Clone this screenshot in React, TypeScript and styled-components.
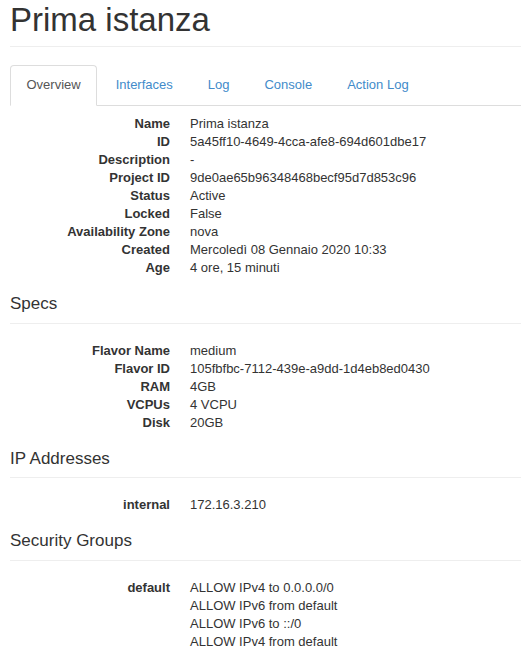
import React from "react";
import styled, { createGlobalStyle } from "styled-components";

const GlobalStyle = createGlobalStyle`
  body {
    margin: 0;
    background: #fff;
    color: #333;
    font-family: "Liberation Sans", Arial, Helvetica, sans-serif;
    font-size: 13px;
    line-height: 1.42857;
  }
`;

type Row = { label: string; values: string[] };

const overview: Row[] = [
  { label: "Name", values: ["Prima istanza"] },
  { label: "ID", values: ["5a45ff10-4649-4cca-afe8-694d601dbe17"] },
  { label: "Description", values: ["-"] },
  { label: "Project ID", values: ["9de0ae65b96348468becf95d7d853c96"] },
  { label: "Status", values: ["Active"] },
  { label: "Locked", values: ["False"] },
  { label: "Availability Zone", values: ["nova"] },
  { label: "Created", values: ["Mercoledì 08 Gennaio 2020 10:33"] },
  { label: "Age", values: ["4 ore, 15 minuti"] },
];

const sections: { title: string; rows: Row[] }[] = [
  {
    title: "Specs",
    rows: [
      { label: "Flavor Name", values: ["medium"] },
      { label: "Flavor ID", values: ["105fbfbc-7112-439e-a9dd-1d4eb8ed0430"] },
      { label: "RAM", values: ["4GB"] },
      { label: "VCPUs", values: ["4 VCPU"] },
      { label: "Disk", values: ["20GB"] },
    ],
  },
  {
    title: "IP Addresses",
    rows: [{ label: "internal", values: ["172.16.3.210"] }],
  },
  {
    title: "Security Groups",
    rows: [
      {
        label: "default",
        values: [
          "ALLOW IPv4 to 0.0.0.0/0",
          "ALLOW IPv6 from default",
          "ALLOW IPv6 to ::/0",
          "ALLOW IPv4 from default",
        ],
      },
    ],
  },
];

const tabs = ["Overview", "Interfaces", "Log", "Console", "Action Log"];

const DetailList = ({ rows }: { rows: Row[] }) => (
  <List>
    {rows.map((row) => (
      <React.Fragment key={row.label}>
        <Term>{row.label}</Term>
        <Desc>
          {row.values.map((v) => (
            <Line key={v}>{v}</Line>
          ))}
        </Desc>
      </React.Fragment>
    ))}
  </List>
);

export default function App() {
  return (
    <>
      <GlobalStyle />
      <Page>
        <PageHeader>
          <Title>Prima istanza</Title>
        </PageHeader>

        <TabBar>
          {tabs.map((t, i) => (
            <TabItem key={t}>
              <TabLink $active={i === 0}>{t}</TabLink>
            </TabItem>
          ))}
        </TabBar>

        <Content>
          <DetailList rows={overview} />
          {sections.map((s) => (
            <section key={s.title}>
              <SectionTitle>{s.title}</SectionTitle>
              <Rule />
              <DetailList rows={s.rows} />
            </section>
          ))}
        </Content>
      </Page>
    </>
  );
}

const Page = styled.div`
  padding: 0 0 0 10px;
`;

const PageHeader = styled.div`
  border-bottom: 1px solid #eee;
  padding: 2px 0 8px;
  margin: 0 0 18px;
`;

const Title = styled.h1`
  margin: 0;
  font-size: 33px;
  font-weight: 500;
  line-height: 1.1;
  color: #333;
`;

const TabBar = styled.ul`
  display: flex;
  list-style: none;
  margin: 0;
  padding: 0;
  border-bottom: 1px solid #ddd;
`;

const TabItem = styled.li`
  margin-bottom: -1px;
`;

const TabLink = styled.a<{ $active?: boolean }>`
  display: block;
  margin-right: 2px;
  padding: 10px 15.5px;
  line-height: 1.42857;
  border: 1px solid ${({ $active }) => ($active ? "#ddd" : "transparent")};
  border-bottom-color: ${({ $active }) => ($active ? "#fff" : "transparent")};
  border-radius: 4px 4px 0 0;
  background: ${({ $active }) => ($active ? "#fff" : "transparent")};
  color: ${({ $active }) => ($active ? "#555" : "#428bca")};
  text-decoration: none;
  cursor: pointer;
`;

const Content = styled.div`
  padding-top: 9px;
`;

const List = styled.dl`
  display: grid;
  grid-template-columns: 160px 1fr;
  column-gap: 20px;
  margin: 0 0 18px;
  line-height: 18px;
`;

const Term = styled.dt`
  font-weight: bold;
  text-align: right;
  white-space: nowrap;
`;

const Desc = styled.dd`
  margin: 0;
`;

const Line = styled.div``;

const SectionTitle = styled.h4`
  margin: 0 0 9px;
  font-size: 17px;
  font-weight: 500;
  line-height: 1.1;
`;

const Rule = styled.hr`
  margin: 0 0 18px;
  border: 0;
  border-top: 1px solid #eee;
`;
